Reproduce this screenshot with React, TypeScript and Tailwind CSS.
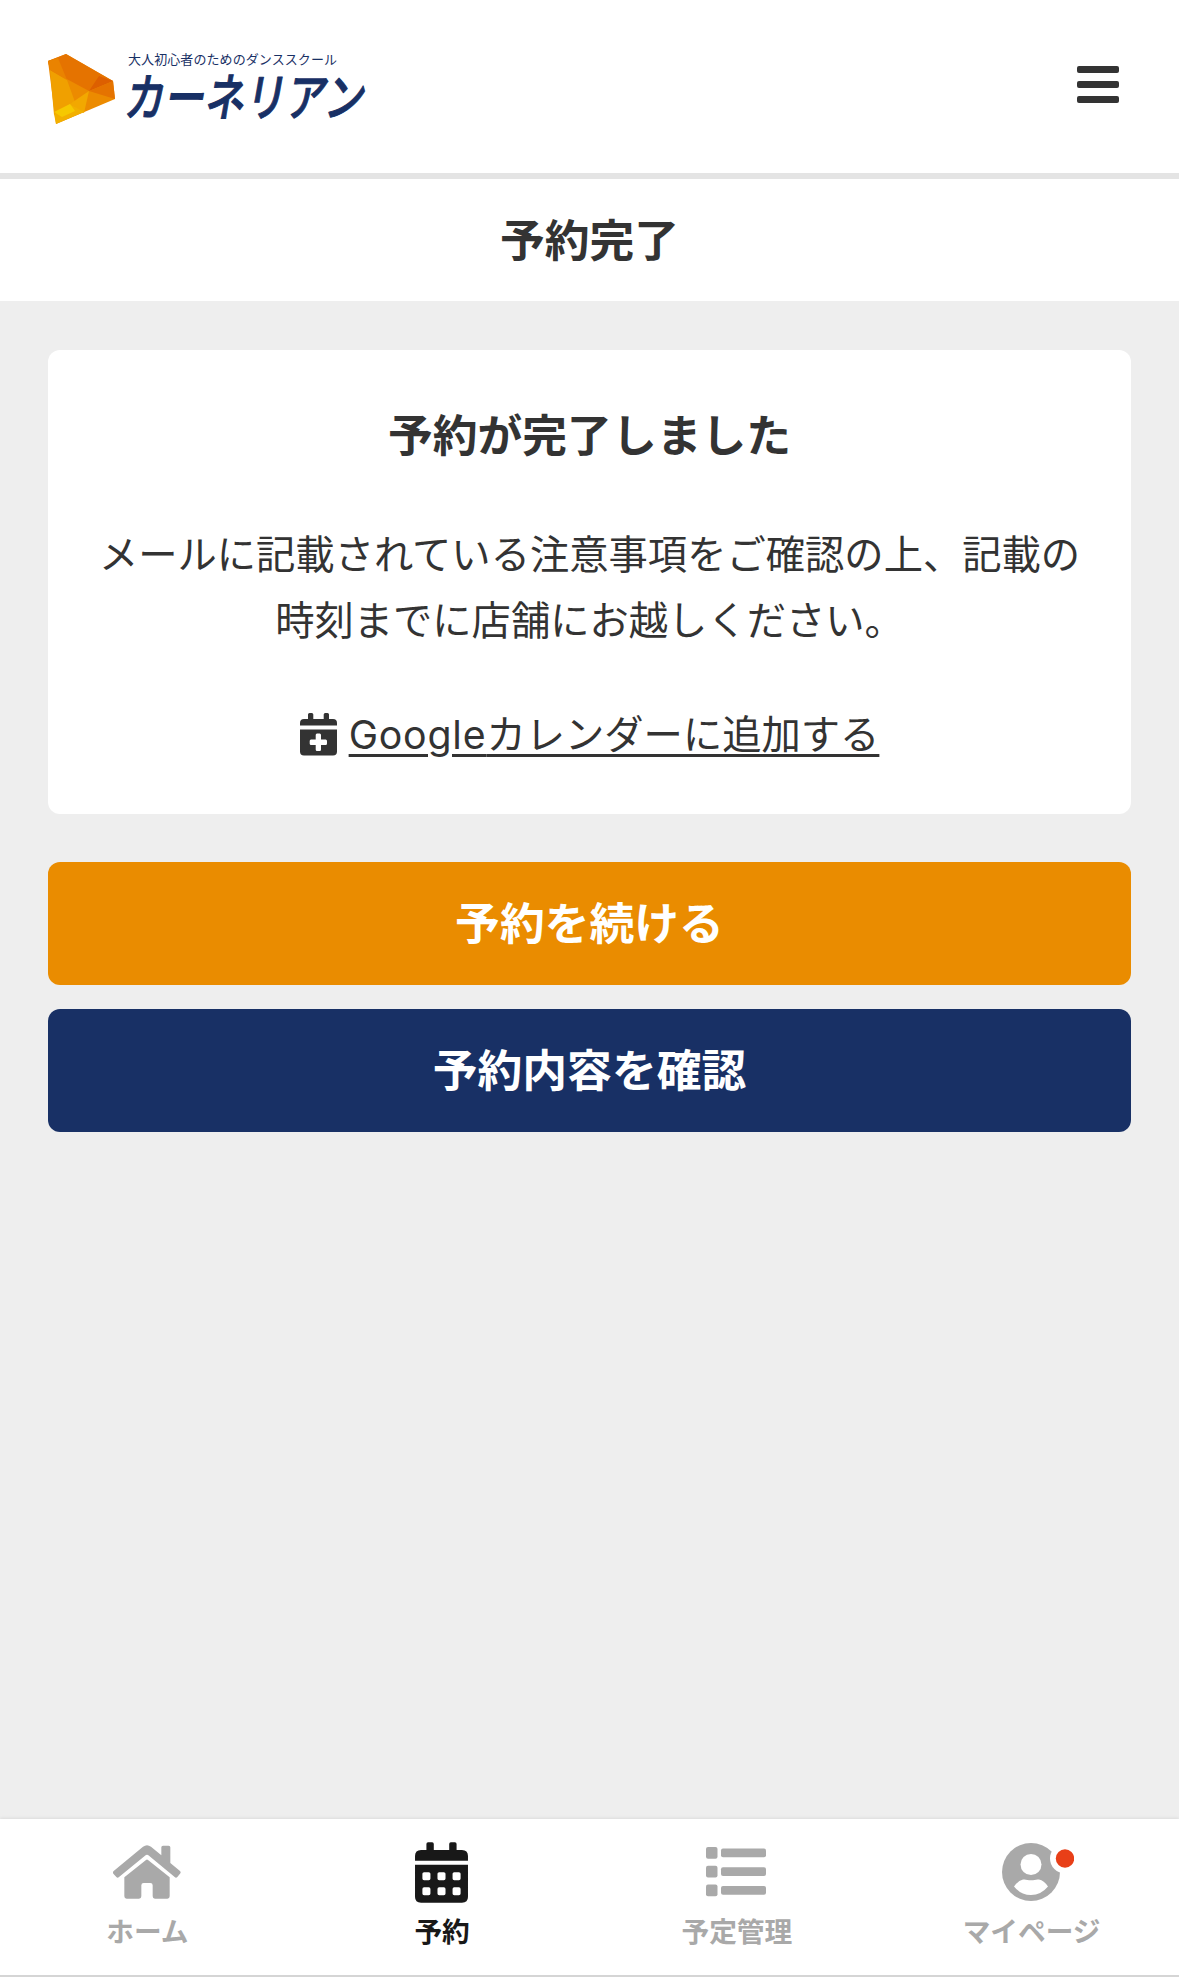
const HomeIcon = () => (
  <svg width="68" height="54" viewBox="0 0 204 162" fill="currentColor">
    <path d="M2 78 L90 5 Q102 -4 114 5 L145 31 V7 Q145 2 150 2 H167 Q172 2 172 7 V54 L201 78 Q205 82 201 86 L193 96 Q189 100 185 96 L108 32 Q102 27 96 32 L18 96 Q14 100 10 96 L1 86 Q-2 82 2 78 Z" />
    <path d="M99 45 Q102 42 105 45 L170 97 V154 Q170 161 163 161 H126 Q119 161 119 154 V121 Q119 114 112 114 H92 Q85 114 85 121 V154 Q85 161 78 161 H41 Q34 161 34 154 V97 Z" />
  </svg>
);

const CalendarIcon = () => (
  <svg width="53" height="61" viewBox="0 0 158 182" fill="currentColor">
    <path d="M0 56 V42 Q0 24 18 24 H34 V6 Q34 1 39 1 H51 Q56 1 56 6 V24 H102 V6 Q102 1 107 1 H119 Q124 1 124 6 V24 H140 Q158 24 158 42 V56 Z" />
    <path
      fillRule="evenodd"
      d="M0 68 H158 V164 Q158 181 140 181 H18 Q0 181 0 164 Z M27 90 q-5 0 -5 5 v14 q0 5 5 5 h14 q5 0 5 -5 v-14 q0 -5 -5 -5 z M72 90 q-5 0 -5 5 v14 q0 5 5 5 h14 q5 0 5 -5 v-14 q0 -5 -5 -5 z M117 90 q-5 0 -5 5 v14 q0 5 5 5 h14 q5 0 5 -5 v-14 q0 -5 -5 -5 z M27 135 q-5 0 -5 5 v14 q0 5 5 5 h14 q5 0 5 -5 v-14 q0 -5 -5 -5 z M72 135 q-5 0 -5 5 v14 q0 5 5 5 h14 q5 0 5 -5 v-14 q0 -5 -5 -5 z M117 135 q-5 0 -5 5 v14 q0 5 5 5 h14 q5 0 5 -5 v-14 q0 -5 -5 -5 z"
    />
  </svg>
);

const ListIcon = () => (
  <svg width="60" height="50" viewBox="0 0 60 50" fill="currentColor">
    {[0, 18.8, 37.6].map((y) => (
      <g key={y}>
        <rect x="0" y={y} width="11.5" height="11.7" rx="2" />
        <rect x="15" y={y + 1.5} width="45" height="8.7" rx="2" />
      </g>
    ))}
  </svg>
);

const UserIcon = () => (
  <svg width="72" height="60" viewBox="0 0 72 60">
    <circle cx="29" cy="30" r="29" fill="#a9a9a9" />
    <circle cx="29" cy="22.500" r="10.500" fill="#fff" />
    <path d="M12 44.500 Q16 38.500 21 37.500 C24 37 25.500 38.300 29 38.300 C32.500 38.300 34 37 37 37.500 Q42 38.500 46 44.500 Q39 53 29 53 Q19 53 12 44.500 Z" fill="#fff" />
    <circle cx="63" cy="16.500" r="15" fill="#fff" />
    <circle cx="63" cy="16.500" r="9.200" fill="#e83f18" />
  </svg>
);

const CalendarPlusIcon = () => (
  <svg width="37" height="43" viewBox="0 0 37 43" fill="#333" className="-mt-px shrink-0">
    <path d="M0 12.500 V10 Q0 6 4 6 H8 V1.500 Q8 0 9.500 0 H11.800 Q13.300 0 13.300 1.500 V6 H23.700 V1.500 Q23.700 0 25.200 0 H27.500 Q29 0 29 1.500 V6 H33 Q37 6 37 10 V12.500 Z" />
    <path
      fillRule="evenodd"
      d="M0 16.500 H37 V38.500 Q37 42.500 33 42.500 H4 Q0 42.500 0 38.500 Z M17 20.500 Q15.700 20.500 15.700 22 V26.500 H11 Q9.700 26.500 9.700 28 V30.500 Q9.700 32 11 32 H15.700 V36.500 Q15.700 38 17 38 H19.700 Q21 38 21 36.500 V32 H25.700 Q27 32 27 30.500 V28 Q27 26.500 25.700 26.500 H21 V22 Q21 20.500 19.700 20.500 Z"
    />
  </svg>
);

const Logo = () => (
  <svg width="360" height="120" viewBox="0 -24 360 120" className="overflow-visible">
    <g>
      <polygon points="0,7 18,0 65,27 67,45 8,70" fill="#ec8b00" />
      <polygon points="0,7 18,0 65,27 41,37 2,16" fill="#e57300" />
      <polygon points="2,16 19,26 27,48 6,61" fill="#f0a000" />
      <polygon points="0,7 2,16 19,26 10,4" fill="#ea8300" />
      <polygon points="65,27 41,37 51,22" fill="#dd5f00" />
      <polygon points="65,27 67,45 41,37" fill="#e57300" />
      <polygon points="41,37 22,50 36,59" fill="#f2a800" />
      <polygon points="22,50 6,60 8,70 36,58" fill="#f2b000" />
      <polygon points="22,50 6,58 14,63 27,57" fill="#f6c800" />
    </g>
    <text x="80" y="10" fontSize="13" fontWeight="400" fill="#183065" textLength="209">
      大人初心者のためのダンススクール
    </text>
    <text fontSize="51" fontWeight="500" fill="#183065" stroke="#183065" strokeWidth="1" strokeLinejoin="round" transform="translate(75 62) skewX(-10) scale(0.79 1)">
      カーネリアン
    </text>
  </svg>
);

const navItems = [
  { label: "ホーム", icon: <HomeIcon />, active: false },
  { label: "予約", icon: <CalendarIcon />, active: true },
  { label: "予定管理", icon: <ListIcon />, active: false },
  { label: "マイページ", icon: <UserIcon />, active: false },
];

const App = () => {
  return (
    <div className="flex h-[1977px] w-[1179px] flex-col bg-[#eeeeee] font-[Inter,'Noto_Sans_CJK_JP',sans-serif] text-[#333333]" lang="ja">
      {/* Header */}
      <header className="flex h-[179px] items-start justify-between border-b-[6px] border-[#e4e4e4] bg-white pt-[30px] pr-[60px] pl-12">
        <Logo />
        <button className="mt-9 flex w-[42px] flex-col gap-2" aria-label="メニュー">
          <span className="h-[7px] w-full rounded-[2px] bg-[#333333]" />
          <span className="h-[7px] w-full rounded-[2px] bg-[#333333]" />
          <span className="h-[7px] w-full rounded-[2px] bg-[#333333]" />
        </button>
      </header>

      <h1 className="flex h-[122px] items-center justify-center bg-white pt-[3px] text-[44.800px] font-bold">予約完了</h1>

      <main className="flex flex-1 flex-col px-12 pt-[49px]">
        <section className="flex h-[464px] flex-col items-center rounded-xl bg-white pt-[53px] text-center">
          <h2 className="text-[44.800px] leading-[66px] font-bold">予約が完了しました</h2>
          <p className="mt-[53px] text-[39.300px] leading-[66px] whitespace-nowrap">
            メールに記載されている注意事項をご確認の上、記載の
            <br />
            時刻までに店舗にお越しください。
          </p>
          <a className="mt-12 flex items-center gap-3 text-[39.300px] leading-[66px]">
            <CalendarPlusIcon />
            <span className="underline decoration-[3px] underline-offset-[5px]">
              <span className="tracking-[0.800px]">Google</span>カレンダーに追加する
            </span>
          </a>
        </section>

        <button className="mt-12 h-[123px] rounded-xl bg-[#ea8c00] pt-[3px] text-[44.800px] font-bold text-white">予約を続ける</button>
        <button className="mt-6 h-[123px] rounded-xl bg-[#183065] pt-[3px] text-[44.800px] font-bold text-white">予約内容を確認</button>
      </main>

      {/* Bottom navigation */}
      <nav className="grid h-[158px] grid-cols-4 border-b-2 border-[#d5d5d5] bg-white shadow-[0_-1px_3px_rgba(0,0,0,0.08)]">
        {navItems.map((item) => (
          <div key={item.label} className={item.active ? "flex flex-col items-center pt-[22px] text-[#181818]" : "flex flex-col items-center pt-[22px] text-[#a9a9a9]"}>
            <div className={item.label === "マイページ" ? "flex h-[62px] items-center pl-3" : "flex h-[62px] items-center pr-px"}>{item.icon}</div>
            <span className="mt-[9px] text-[27.700px] leading-10 font-bold">{item.label}</span>
          </div>
        ))}
      </nav>
    </div>
  );
};

export default App;
